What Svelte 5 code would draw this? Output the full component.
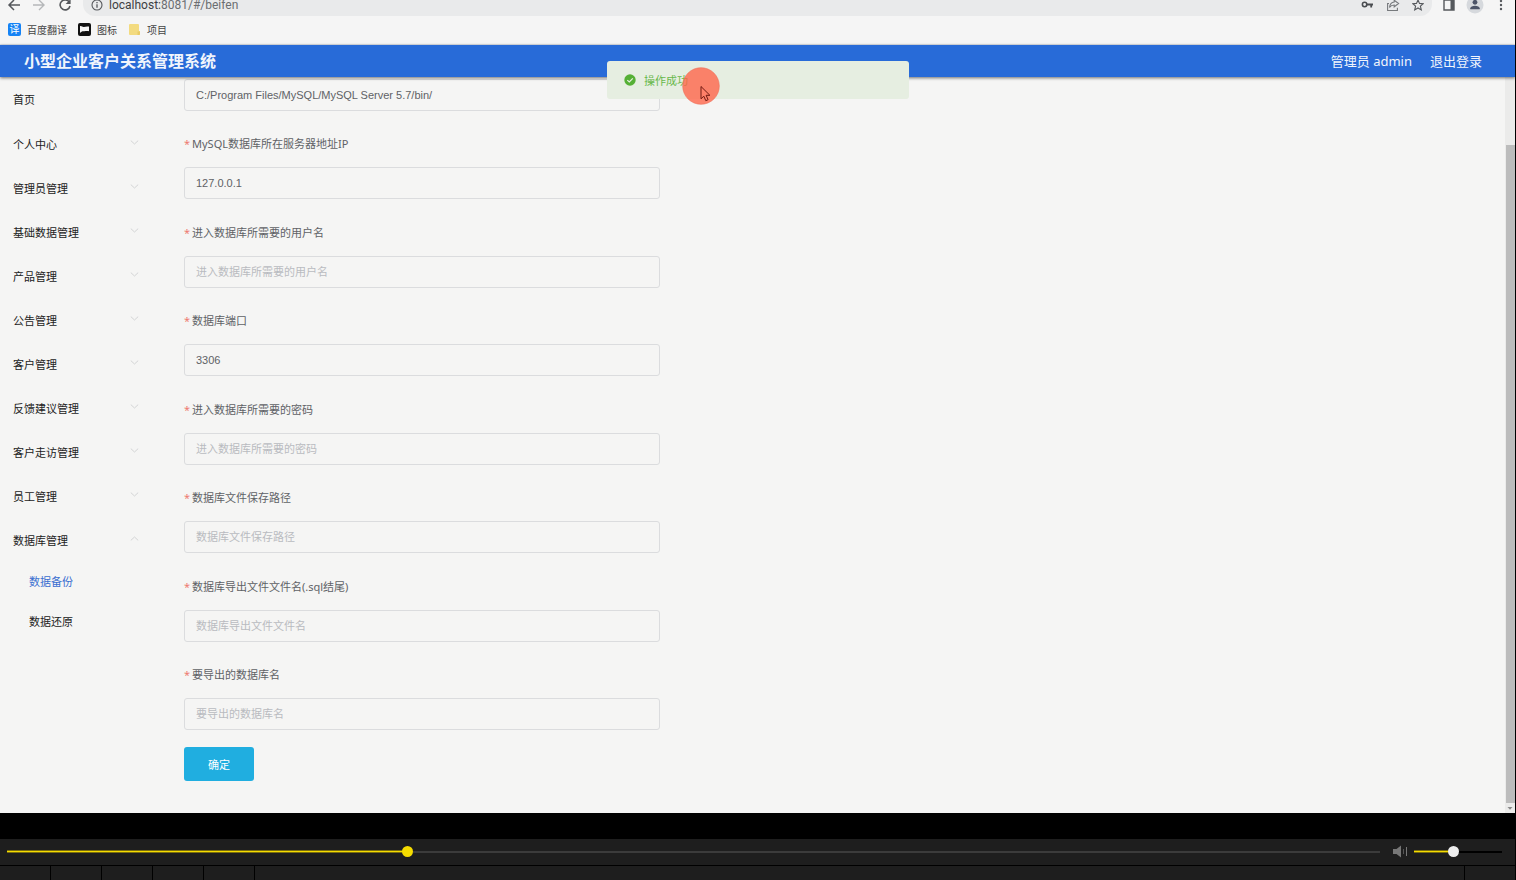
<script>
  let progress = $state(290);
  let volume = $state(44);
  let menu = $state([
    { name: '首页' },
    { name: '个人中心', children: [] },
    { name: '管理员管理', children: [] },
    { name: '基础数据管理', children: [] },
    { name: '产品管理', children: [] },
    { name: '公告管理', children: [] },
    { name: '客户管理', children: [] },
    { name: '反馈建议管理', children: [] },
    { name: '客户走访管理', children: [] },
    { name: '员工管理', children: [] },
    { name: '数据库管理', open: true, children: ['数据备份', '数据还原'] }
  ]);
  let binPath = $state('C:/Program Files/MySQL/MySQL Server 5.7/bin/');
  let fields = $state([
    { id: 'ip', label: 'MySQL数据库所在服务器地址IP', value: '127.0.0.1' },
    { id: 'user', label: '进入数据库所需要的用户名', hint: '进入数据库所需要的用户名', value: '' },
    { id: 'port', label: '数据库端口', value: '3306' },
    { id: 'pass', label: '进入数据库所需要的密码', hint: '进入数据库所需要的密码', value: '' },
    { id: 'path', label: '数据库文件保存路径', hint: '数据库文件保存路径', value: '' },
    { id: 'file', label: '数据库导出文件文件名(.sql结尾)', hint: '数据库导出文件文件名', value: '' },
    { id: 'db', label: '要导出的数据库名', hint: '要导出的数据库名', value: '' }
  ]);
</script>

<div class="app">
  <div class="toolbar">
    <button class="tool" aria-label="后退"><svg width="14" height="14" viewBox="0 0 14 14"><path d="M13 7H2M7 2 2 7l5 5" fill="none" stroke="#55585c" stroke-width="1.5" /></svg></button>
    <button class="tool" aria-label="前进"><svg width="14" height="14" viewBox="0 0 14 14"><path d="M1 7h11M7 2l5 5-5 5" fill="none" stroke="#b5b7b9" stroke-width="1.4" /></svg></button>
    <button class="tool" aria-label="刷新"><svg width="14" height="14" viewBox="0 0 14 14"><path d="M11.4 4.3A5 5 0 1 0 12 8" fill="none" stroke="#55585c" stroke-width="1.6" /><path d="M12.6 1v5h-5z" fill="#55585c" /></svg></button>
    <div class="address">
      <svg width="12" height="12" viewBox="0 0 12 12"><circle cx="6" cy="6" r="5" fill="none" stroke="#55585c" stroke-width="1.1" /><path d="M6 5.2v3.5M6 3v1.3" stroke="#55585c" stroke-width="1.3" /></svg>
      <a class="url" href="#/beifen"><span>localhost:</span>8081/#/beifen</a>
      <svg width="13" height="12" viewBox="0 0 13 12"><circle cx="3.6" cy="5.5" r="2.2" fill="none" stroke="#4a4d51" stroke-width="1.6" /><path d="M5.5 5.5H12M10.2 5.5v3" fill="none" stroke="#4a4d51" stroke-width="1.8" /></svg>
      <svg width="14" height="14" viewBox="0 0 14 14"><path d="M3 5.5H1.6v7h9.8V9.8" fill="none" stroke="#777a7d" stroke-width="1.1" /><path d="M8.2 2.2 12.6 5.5 8.2 8.8V7C6 7 4.6 7.8 3.5 9.5 3.8 6.5 5.5 4.3 8.2 4z" fill="none" stroke="#777a7d" stroke-width="1.1" /></svg>
      <svg width="12" height="12" viewBox="0 0 12 12"><path d="m6 1 1.5 3.4 3.7.3-2.8 2.5.9 3.7L6 9l-3.300 1.900.9-3.700L.8 4.700l3.700-.3z" fill="none" stroke="#55585c" stroke-width="1.1" /></svg>
    </div>
    <button class="tool" aria-label="侧边栏"><svg width="12" height="12" viewBox="0 0 12 12"><path d="M1 1h10v10H1z" fill="none" stroke="#55585c" stroke-width="1.4" /><path d="M7.5 1H11v10H7.500z" fill="#55585c" /></svg></button>
    <button class="tool" aria-label="用户"><svg width="18" height="18" viewBox="0 0 18 18"><circle cx="9" cy="9" r="8.5" fill="#d6d9dd" /><circle cx="9" cy="6.3" r="2.4" fill="#4c5468" /><path d="M4.300 13.300v-1c0-3.500 9.400-3.500 9.400 0v1z" fill="#4c5468" /></svg></button>
    <button class="tool" aria-label="更多"><svg width="12" height="14" viewBox="0 0 12 14"><g fill="#55585c"><circle cx="6" cy="3" r="1.2" /><circle cx="6" cy="7" r="1.2" /><circle cx="6" cy="11" r="1.2" /></g></svg></button>
  </div>

  <nav class="bookmarks">
    <a href="#/fanyi"><span class="fanyi">译</span>百度翻译</a>
    <a href="#/icons"><svg width="13" height="13" viewBox="0 0 13 13"><rect width="13" height="13" rx="2" fill="#111" /><path d="M2 10V3.200c1.400-.8 2.200.9 3.900.7 1.500-.3 3.200-.8 5.100-.3v4.700c-2-.5-3.800.2-5.600 0C4.200 8.200 3.200 8.800 2 10z" fill="#f5f5f5" /></svg>图标</a>
    <a href="#/projects"><svg width="13" height="13" viewBox="0 0 13 13"><path d="M2 1h8a1 1 0 0 1 1 1v6h1v3a1 1 0 0 1-1 1H2a1 1 0 0 1-1-1V2a1 1 0 0 1 1-1z" fill="#f3db80" /><path d="M9.500 8.500h2.500V11a1 1 0 0 1-1 1H9.500z" fill="#e9cb68" /></svg>项目</a>
  </nav>

  <header class="header">
    <h1>小型企业客户关系管理系统</h1>
    <span>管理员 admin</span>
    <a href="#/login">退出登录</a>
  </header>

  <div class="body">
    <aside class="sidebar">
      <ul>
        {#each menu as item}
          <li>
            <button class="item" onclick={() => (item.open = !item.open)}>
              {item.name}
              {#if item.children}
                <svg class:open={item.open} width="9" height="5" viewBox="0 0 9 5"><path d="m.8.6 3.700 3.400L8.200.6" fill="none" stroke="#d3d4d5" /></svg>
              {/if}
            </button>
            {#if item.open && item.children}
              {#each item.children as child, i}
                <a class="sub" class:active={i === 0} href="#/{i ? 'huanyuan' : 'beifen'}">{child}</a>
              {/each}
            {/if}
          </li>
        {/each}
      </ul>
    </aside>
    <main>
      <form onsubmit={(e) => e.preventDefault()}>
        <div class="fields">
          <div class="field">
            <input type="text" aria-label="MySQL" bind:value={binPath} />
          </div>
          {#each fields as f}
            <div class="field">
              <label for={f.id}><i>*</i>{f.label}</label>
              <input id={f.id} type="text" placeholder={f.hint} bind:value={f.value} />
            </div>
          {/each}
        </div>
        <button class="submit">确定</button>
      </form>
    </main>
    <div class="scrollbar">
      <div class="thumb"></div>
      <svg width="10" height="10" viewBox="0 0 10 10"><path d="M2.5 4h5L5 6.800z" fill="#8a8a8a" /></svg>
    </div>
  </div>

  <div class="letterbox"></div>
  <div class="player">
    <input class="seek" type="range" aria-label="进度" min="0" max="1000" bind:value={progress} style:--fill="{progress / 10}%" />
    <svg width="15" height="13" viewBox="0 0 15 13"><path d="M0 4h3.500L8 .5v12L3.500 9H0z" fill="#777" /><path d="M10.500 4v5" stroke="#555" /><path d="M13.500 2v9" stroke="#777" /></svg>
    <input class="volume" type="range" aria-label="音量" min="0" max="100" bind:value={volume} style:--fill="{volume}%" />
  </div>
  <div class="controls">
    <div></div><div></div><div></div><div></div><div></div><div class="wide"></div><div></div>
  </div>

  <div class="toast" role="status">
    <svg width="12" height="12" viewBox="0 0 12 12"><circle cx="6" cy="6" r="5.7" fill="#55b035" /><path d="m3.300 6.100 2 1.900 3.500-3.700" fill="none" stroke="#e7efe2" stroke-width="1.2" /></svg>
    操作成功
    <svg class="pointer" width="38" height="38" viewBox="0 0 38 38"><circle cx="19" cy="19" r="18.3" fill="#ff6347" fill-opacity=".78" stroke="#f0705a" stroke-width=".6" /><path d="M19 19.500v12.300l2.800-2.600 2 4.500 2.300-1-2-4.400h3.800z" fill="#ff8069" stroke="#701a12" stroke-width="1" /></svg>
  </div>
</div>

<style>
  :global(body) { margin: 0; background: #000; }
  * { box-sizing: border-box; }
  button { border: 0; padding: 0; background: none; font: inherit; color: inherit; }
  a { color: inherit; text-decoration: none; }
  svg { flex: none; display: block; }
  .app {
    position: relative; display: flex; flex-direction: column; min-height: 100vh; padding-right: 1px;
    background: #000; color: #222; font: 11px "Noto Sans", "Noto Sans CJK SC", sans-serif;
  }
  .toolbar { display: flex; align-items: flex-end; height: 16px; overflow: hidden; padding: 0 1px 0 7px; background: #f5f5f5; }
  .tool { display: flex; align-items: center; justify-content: center; width: 26px; height: 22px; flex: none; }
  .tool:first-child { width: 14px; margin-right: 5px; }
  .address { display: flex; align-items: center; gap: 12px; flex: 1; height: 22px; margin: 0 4px 0 5px; padding: 0 8px; border-radius: 0 0 12px 12px; background: #e9eaeb; }
  .url { flex: 1; margin-left: -6px; font-family: Roboto, sans-serif; font-size: 12px; line-height: 14px; color: #6b6e71; }
  .url span { color: #3d4043; }
  .bookmarks { display: flex; align-items: center; gap: 11px; height: 29px; padding: 0 8px 1px; border-bottom: 1px solid #dfe3e8; background: #f5f5f5; font-size: 10px; color: #444; }
  .bookmarks a { display: flex; align-items: center; gap: 6px; }
  .fanyi { width: 13px; height: 13px; border-radius: 2px; background: #1583f5; color: #fff; line-height: 13px; text-align: center; }
  .header { position: relative; z-index: 1; display: flex; align-items: center; gap: 18px; height: 32px; padding: 0 33px 1px 24px; background: #286bd8; color: #f1f5fc; font-size: 13px; box-shadow: 0 1px 3px #0000008c; }
  h1 { flex: 1; margin: 0; font-size: 16px; line-height: 32px; }
  .body { display: flex; flex: 1; overflow: hidden; background: #f5f5f4; }
  .sidebar { width: 160px; flex: none; }
  ul { list-style: none; margin: 0; padding: 0; }
  .item { display: flex; align-items: center; justify-content: space-between; width: 100%; height: 44px; padding: 0 21px 0 13px; }
  li:first-child { margin-bottom: 1px; }
  .item svg { margin-bottom: 4px; }
  .open { transform: rotate(180deg); }
  .sub { display: block; padding-left: 29px; line-height: 40px; }
  .active { color: #3a6fd0; }
  main { display: flex; flex: 1; padding: 0 0 32px 24px; }
  form { display: flex; flex-direction: column; flex: 1; margin-top: -38px; }
  .fields { display: grid; grid-auto-rows: 1fr; flex: 1; }
  .field { display: flex; flex-direction: column; justify-content: flex-end; gap: 7px; min-height: 88px; padding-bottom: 17px; }
  label { line-height: 32px; color: #606266; }
  label i { display: inline-block; width: 8px; font-style: normal; color: #ee7b70; }
  input[type='text'] { width: 36%; min-width: 300px; height: 32px; padding: 0 11px; border: 1px solid #dbdcde; border-radius: 3px; outline: 0; background: transparent; color: #606266; font: 11px "Liberation Sans", "Noto Sans CJK SC", sans-serif; }
  input::placeholder { color: #b9bbc0; opacity: 1; }
  .submit { width: 70px; height: 34px; border-radius: 3px; background: #20aee0; color: #fff; }
  .scrollbar { display: flex; flex-direction: column; align-items: center; width: 10px; padding-top: 68px; background: #ebebea; }
  .thumb { flex: 1; align-self: stretch; margin-left: 1px; background: #bcbcbc; }
  .letterbox { height: 26px; }
  .player { display: flex; align-items: center; height: 26px; padding: 0 13px 1px 7px; background: #1e1e1e; }
  .player svg { margin: 0 6px 0 13px; }
  input[type='range'] { appearance: none; height: 11px; margin: 0; background: none; }
  .seek { flex: 1; --rest: #3b3b3b; --knob: #f5dc00; }
  .volume { width: 88px; --rest: #000; --knob: #eee; }
  input[type='range']::-webkit-slider-runnable-track { height: 3px; background: linear-gradient(#7a6e0d 1px, #f5dc00 1px 2px, #7a6e0d 2px) 0 / var(--fill) 100% no-repeat, linear-gradient(var(--rest), var(--rest)) 0 50% / 100% 2px no-repeat; }
  input[type='range']::-webkit-slider-thumb { appearance: none; width: 11px; height: 11px; margin-top: -4px; border-radius: 50%; background: var(--knob); }
  .controls { display: flex; height: 15px; padding-top: 1px; gap: 1px; }
  .controls div { width: 50px; background: #1e1e1e; }
  .controls .wide { flex: 1; }
  .toast { position: absolute; z-index: 2; top: 61px; left: 50%; display: flex; align-items: center; gap: 8px; width: 302px; height: 38px; padding: 0 17px; border-radius: 3px; background: #e6eee1; color: #68b84b; transform: translateX(-50%); }
  .pointer { position: absolute; left: 75px; top: 6px; }
</style>
